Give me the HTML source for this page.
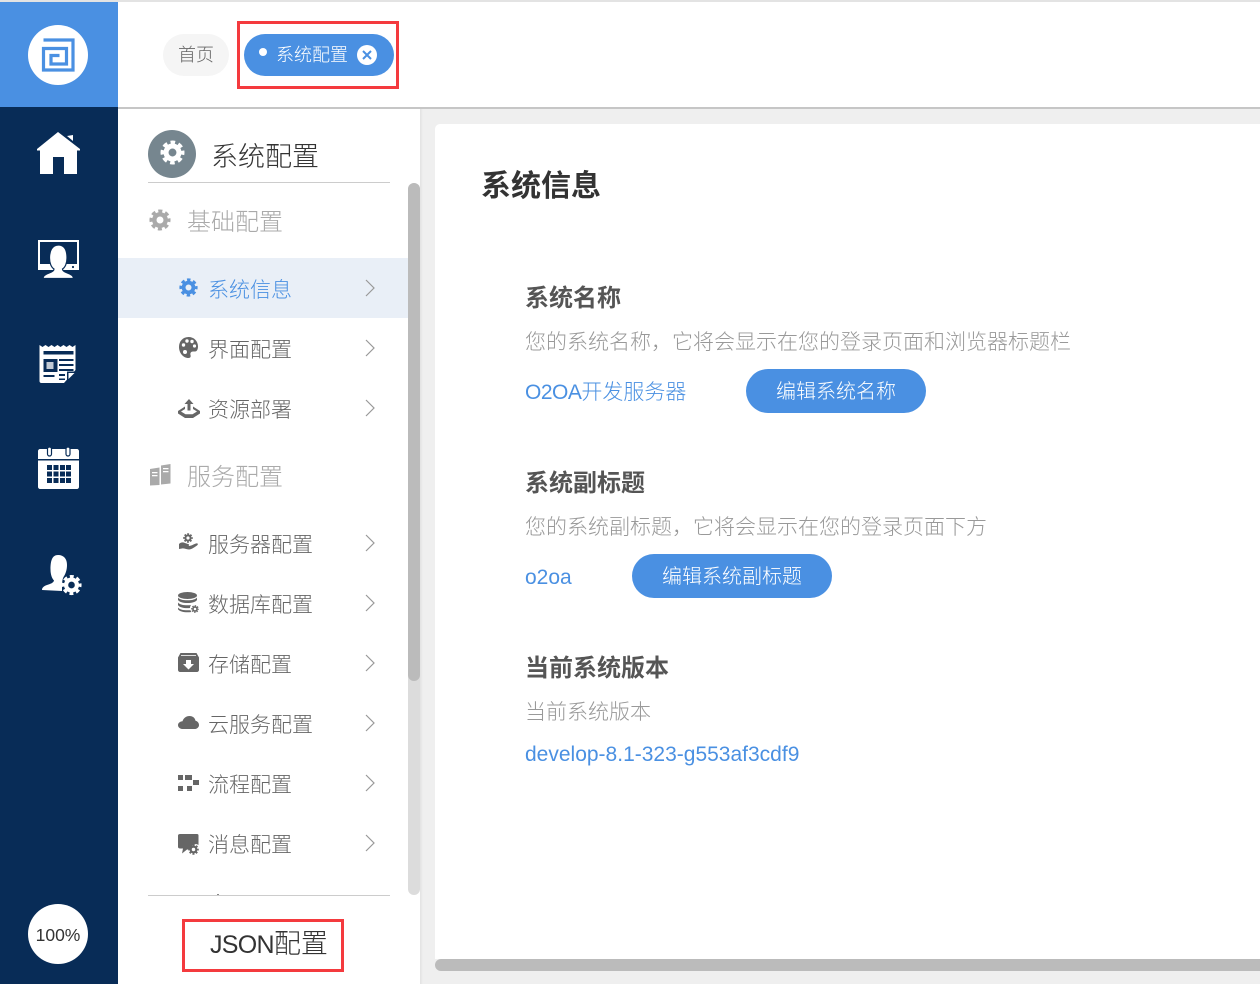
<!DOCTYPE html>
<html lang="zh"><head><meta charset="utf-8"><title>系统配置</title>
<style>
html,body{margin:0;padding:0;background:#fff}
body{position:relative;width:1260px;height:984px;overflow:hidden;font-family:"Liberation Sans","Noto Sans CJK SC",sans-serif;font-weight:300}
.a{position:absolute;display:block}
.t{position:absolute;white-space:nowrap;line-height:40px;height:40px}
.i{position:absolute;overflow:visible}
.row{font-size:21px;color:#666;left:208px}
.h{font-size:24px;color:#aaa;left:187px}
.st{font-size:24px;font-weight:700;color:#555;left:525px}
.d{font-size:21px;color:#999;left:525px}
.l{font-size:21px;color:#4a90e2;left:525px}
.btn{position:absolute;background:#4a90e2;color:#fff;border-radius:22px;height:44px;line-height:47px;text-align:center;font-size:20px;white-space:nowrap}
.ch{position:absolute;left:363.500px;width:12px;height:20px}
</style></head><body>
<svg width="0" height="0" style="position:absolute"><defs>
<symbol id="gear" viewBox="0 0 24 24"><circle cx="12" cy="12" r="6.200" fill="none" stroke="currentColor" stroke-width="4.800"/><circle cx="12" cy="12" r="9.800" fill="none" stroke="currentColor" stroke-width="3.400" stroke-dasharray="4.400 3.300" stroke-dashoffset="2.200"/></symbol>
<symbol id="chev" viewBox="0 0 12 20"><path d="M2 2l8 8-8 8" fill="none" stroke="#999" stroke-width="1.200"/></symbol>
</defs></svg>

<!-- top -->
<div class="a" style="left:0;top:0;width:1260px;height:2px;background:#e3e3e3"></div>
<div class="a" style="left:118px;top:107px;width:1142px;height:2px;background:#c6c6c6"></div>
<div class="a" style="left:420px;top:109px;width:840px;height:875px;background:#efefef"></div>
<div class="a" style="left:420px;top:109px;width:3px;height:875px;background:linear-gradient(90deg,#e2e2e2,#efefef)"></div>
<div class="a" style="left:435px;top:124px;width:825px;height:835px;background:#fff;border-top-left-radius:5px"></div>
<div class="a" style="left:435px;top:959px;width:825px;height:12px;background:#bbb;border-radius:6px 0 0 6px"></div>

<!-- left nav -->
<div class="a" style="left:0;top:2px;width:118px;height:105px;background:#4a90e2"></div>
<div class="a" style="left:0;top:107px;width:118px;height:877px;background:#082c57"></div>
<div class="a" style="left:28px;top:25px;width:60px;height:60px;border-radius:50%;background:#fff"></div>
<svg class="i" style="left:41px;top:38px" width="34" height="34" viewBox="0 0 34 34" fill="none" stroke="#4a90e2" stroke-width="3.200">
<path d="M2.500 2H32V32H2.500V10.500H25.500V26H10V17.500H18.500"/></svg>

<svg class="i" style="left:36px;top:131px" width="46" height="44" viewBox="0 0 46 44" fill="#fff"><path d="M22 1L1 18v1.500h3V43h13V26h11v17h13V19.500h3V18z"/><path d="M31 5l6-1v6z"/></svg>

<svg class="i" style="left:37px;top:239px" width="43" height="40" viewBox="0 0 43 40"><path d="M2 2h39v27H2z" fill="none" stroke="#fff" stroke-width="2"/><path d="M1 25h41v6H1z" fill="#fff"/><circle cx="36" cy="28" r="1.100" fill="#082c57"/><path d="M6 39.500c0-3 3-4.500 6-5.500 2.500-.8 5-1.800 5-4-2.500-1.500-4.500-5.500-4.500-11C12.500 12 15 6 21.500 6S30 12 30 19c0 5.500-2 9.500-4.500 11 0 2.200 2.500 3.200 5 4 3 1 6 2.500 6 5.500z" fill="#fff" stroke="#082c57" stroke-width="1.200"/></svg>

<svg class="i" style="left:39px;top:344px" width="39" height="39" viewBox="0 0 39 39"><path d="M.5 1l3 2 3-2 3 2 3-2 3 2 3-2 3 2 3-2 3 2 3-2 3 2 3-2V26L25 39H2.500C1 39 .5 38 .5 37z" fill="#fff"/><path d="M4.500 7h30v3.500h-30z" fill="#082c57"/><path d="M4.500 15h14v13h-14z" fill="#082c57"/><path d="M7.500 18h7v7h-7z" fill="#fff" opacity=".75"/><path d="M20 15h14.500v2H20zM20 20h14.500v2H20zM20 25h14.500v2H20zM4.500 31h11v2h-11zM20 30h6v2h-6zM20 34.500h6v1.500h-6z" fill="#082c57"/><path d="M38 27.500L28 37.500V27.500z" fill="#082c57"/><path d="M29.500 29h6L29.500 35z" fill="#fff"/></svg>

<svg class="i" style="left:38px;top:446px" width="42" height="44" viewBox="0 0 42 44"><path d="M2 3h37c1 0 2 1 2 2v8H0V5c0-1 1-2 2-2zM0 14.500h41V41c0 1-1 2-2 2H2c-1 0-2-1-2-2z" fill="#fff"/><rect x="9.500" y="1" width="4" height="9" rx="2" fill="#fff" stroke="#082c57" stroke-width="1.200"/><rect x="28" y="1" width="4" height="9" rx="2" fill="#fff" stroke="#082c57" stroke-width="1.200"/><g fill="#082c57"><path d="M9 19h5v5H9zM15.500 19h5v5h-5zM22 19h5v5h-5zM28 19h5v5h-5zM9 25.500h5v5H9zM15.500 25.500h5v5h-5zM22 25.500h5v5h-5zM28 25.500h5v5h-5zM9 32h5v5H9zM15.500 32h5v5h-5zM22 32h5v5h-5zM28 32h5v5h-5z"/></g></svg>

<svg class="i" style="left:42px;top:554px" width="40" height="44" viewBox="0 0 40 44"><path d="M0 36c0-2.500 2-4 5-5 3-1 6.500-2 7-4.500-2-2-3.500-6-3.500-11C8.500 7 10 1 16 1s9 4 9 10c0 5-1.500 9-3.500 12-1 2-1.500 5-1.500 8v6z" fill="#fff"/><svg x="19" y="20" width="21" height="22" viewBox="0 0 24 24" color="#fff"><use href="#gear"/></svg></svg>

<div class="a" style="left:28px;top:904px;width:60px;height:60px;border-radius:50%;background:#fff;color:#333;font-size:17.500px;text-align:center;line-height:62px;font-weight:300">100%</div>

<!-- tabs -->
<div class="a" style="left:163px;top:34px;width:66px;height:42px;border-radius:21px;background:#f5f5f5;text-align:center;line-height:43px;font-size:18px;color:#666">首页</div>
<div class="a" style="left:244px;top:34px;width:150px;height:42px;border-radius:21px;background:#4a90e2"></div>
<div class="a" style="left:259px;top:48px;width:8px;height:8px;border-radius:50%;background:#fff"></div>
<div class="t" style="left:276px;top:35px;font-size:18px;color:#fff">系统配置</div>
<svg class="i" style="left:357px;top:45px" width="20" height="20" viewBox="0 0 20 20"><circle cx="10" cy="10" r="10" fill="#fff"/><path d="M6 6l8 8M14 6l-8 8" stroke="#4a90e2" stroke-width="2"/></svg>
<div class="a" style="left:237px;top:21px;width:156px;height:62px;border:3px solid #f43a3e"></div>

<!-- side menu -->
<div class="a" style="left:408px;top:183px;width:12px;height:712px;background:#dcdcdc;border-radius:6px"></div>
<div class="a" style="left:408px;top:183px;width:12px;height:498px;background:#bbb;border-radius:6px"></div>
<div class="a" style="left:148px;top:130px;width:48px;height:48px;border-radius:50%;background:#76868f"></div>
<svg class="i" style="left:160px;top:140px;color:#fff" width="25" height="25"><use href="#gear"/></svg>
<div class="t" style="left:211px;top:137px;font-size:27px;color:#333">系统配置</div>
<div class="a" style="left:148px;top:182px;width:242px;height:1px;background:#ccc"></div>
<svg class="i" style="left:149px;top:209px;color:#aaa" width="22" height="22"><use href="#gear"/></svg>
<div class="t h" style="top:203px">基础配置</div>

<div class="a" style="left:118px;top:258px;width:290px;height:60px;background:#e9eff7"></div>
<svg class="i" style="left:179px;top:278px;color:#4a90e2" width="19" height="19"><use href="#gear"/></svg>
<div class="t row" style="top:271px;color:#4a90e2">系统信息</div>
<svg class="ch" style="top:278px"><use href="#chev"/></svg>

<svg class="i" style="left:179px;top:337px" width="19" height="21" viewBox="0 0 19 21"><path d="M9.500 0C4 0 0 4.200 0 10s4 11 9.500 11c2 0 2.500-1.500 2-3-.5-2 .5-3.500 2.500-3.500h2C18 14.500 19 12 19 9.500 19 4 15 0 9.500 0z" fill="#666"/><g fill="#fff"><circle cx="4.500" cy="8" r="1.700"/><circle cx="8" cy="4" r="1.700"/><circle cx="13" cy="4.500" r="1.700"/><circle cx="15.500" cy="9" r="1.600"/><circle cx="6" cy="15" r="2"/></g></svg>
<div class="t row" style="top:331px">界面配置</div>
<svg class="ch" style="top:338px"><use href="#chev"/></svg>

<svg class="i" style="left:178px;top:399px" width="22" height="20" viewBox="0 0 22 20" fill="#666"><path d="M11 0l4.500 5h-3v6.500h-3V5h-3z"/><path d="M7 7.500L0 12v2.500L7 19h8l7-4.500V12l-7-4.500v2.500l4 2.500-4.500 2.800h-7L3 12.500 7 10z"/></svg>
<div class="t row" style="top:391px">资源部署</div>
<svg class="ch" style="top:398px"><use href="#chev"/></svg>

<svg class="i" style="left:150px;top:464px" width="21" height="22" viewBox="0 0 21 22" fill="#aaa"><path d="M0 5l9.500-1.500V21L0 21.500z"/><path d="M11 1.500L20.500 0v19.500L11 20.500z"/><path d="M2 8h5.500v1.300H2zM2 11h5.500v1.300H2zM13 4h5.500v1.300H13zM13 7h5.500v1.300H13z" fill="#fff"/></svg>
<div class="t h" style="top:458px">服务配置</div>

<svg class="i" style="left:179px;top:531px" width="20" height="20" viewBox="0 0 20 20" fill="#666"><path d="M0 13c2-2 4-2 6-1l3 1c1.500 0 1.500 2 0 2H6.500h3.500c2 0 5-2 7-2.500 2-.5 2.500 1 1 2-3 2-5.500 4-8 4-3 0-5-1.500-7-1L0 18z"/></svg>
<svg class="i" style="left:183px;top:533px;color:#666" width="10" height="10"><use href="#gear"/></svg>
<div class="t row" style="top:526px">服务器配置</div>
<svg class="ch" style="top:533px"><use href="#chev"/></svg>

<svg class="i" style="left:178px;top:592px" width="21" height="21" viewBox="0 0 21 21" fill="#666"><ellipse cx="9.500" cy="3.500" rx="9.500" ry="3.500"/><path d="M0 5.500c1.500 2 5 2.800 9.500 2.800S17.500 7.500 19 5.500V8c-1.500 2-5 3-9.500 3S1.500 10 0 8zM0 10.500c1.500 2 5 2.800 9.500 2.800 1.300 0 2.500 0 3.500-.3-.7 1-1 2-1 3-.8.100-1.600.100-2.500.100-4.500 0-8-1-9.500-3zM0 15.500c1.500 2 5 2.800 9.500 2.800h3c.3.800.5 1.200 1 1.700-1.300.2-2.700.3-4 .3-4.500 0-8-1-9.500-3z"/></svg>
<svg class="i" style="left:191px;top:605px;color:#666" width="8" height="8"><use href="#gear"/></svg>
<div class="t row" style="top:586px">数据库配置</div>
<svg class="ch" style="top:593px"><use href="#chev"/></svg>

<svg class="i" style="left:178px;top:653px" width="21" height="19" viewBox="0 0 21 19"><path d="M2.500 0h16l2.500 4.500V17c0 1-1 2-2 2H2c-1 0-2-1-2-2V4.500z" fill="#666"/><path d="M3 2.500h15" stroke="#fff" stroke-width=".8"/><path d="M8 7h5v4h3l-5.500 5.500L5 11h3z" fill="#fff"/></svg>
<div class="t row" style="top:646px">存储配置</div>
<svg class="ch" style="top:653px"><use href="#chev"/></svg>

<svg class="i" style="left:178px;top:716px" width="21" height="13" viewBox="0 0 21 15" preserveAspectRatio="none"><path d="M5 15C2 15 0 13 0 10.500S2 6.300 4.500 6C5.500 2.500 8 0 11.500 0c3.500 0 5.500 2.500 6 5.500 2 .5 3.500 2.500 3.500 5 0 2.500-2 4.500-4.500 4.500z" fill="#666"/></svg>
<div class="t row" style="top:706px;left:208px">云服务配置</div>
<svg class="ch" style="top:713px"><use href="#chev"/></svg>

<svg class="i" style="left:178px;top:775px" width="21" height="16" viewBox="0 0 21 16" fill="#666"><path d="M0 0h5v5H0zM7 0h7v5H7zM15 5h6v5h-6zM0 11h5v5H0zM9 11h5v5H9z"/></svg>
<div class="t row" style="top:766px">流程配置</div>
<svg class="ch" style="top:773px"><use href="#chev"/></svg>

<svg class="i" style="left:178px;top:834px" width="22" height="20" viewBox="0 0 22 20"><path d="M2 0h17c1 0 1.500.5 1.500 1.500V11c-2-1.500-5-1-6.500 1-1 1.500-1 3-.5 3.500H9L4 19.500 5 14.500H2c-1 0-2-.5-2-1.500V1.500C0 .5 1 0 2 0z" fill="#666"/></svg>
<svg class="i" style="left:188px;top:844px;color:#666" width="11" height="11"><use href="#gear"/></svg>
<div class="t row" style="top:826px">消息配置</div>
<svg class="ch" style="top:833px"><use href="#chev"/></svg>

<div class="a" style="left:148px;top:895px;width:242px;height:1px;background:#ccc"></div>
<div class="a" style="left:217px;top:894px;width:2px;height:1px;background:#888"></div>
<div class="a" style="left:182px;top:919px;width:156px;height:47px;border:3px solid #f43a3e"></div>
<div class="t" style="left:210px;top:924px;font-size:27px;color:#333"><span style="font-size:25px;letter-spacing:-.7px">JSON</span>配置</div>

<!-- content -->
<div class="t" style="left:481px;top:167px;font-size:30px;font-weight:700;color:#333">系统信息</div>

<div class="t st" style="top:279px">系统名称</div>
<div class="t d" style="top:323px">您的系统名称，它将会显示在您的登录页面和浏览器标题栏</div>
<div class="t l" style="top:373px"><span style="letter-spacing:-.5px">O2OA</span>开发服务器</div>
<div class="btn" style="left:746px;top:369px;width:180px">编辑系统名称</div>

<div class="t st" style="top:464px">系统副标题</div>
<div class="t d" style="top:508px">您的系统副标题，它将会显示在您的登录页面下方</div>
<div class="t l" style="top:558px">o2oa</div>
<div class="btn" style="left:632px;top:554px;width:200px">编辑系统副标题</div>

<div class="t st" style="top:649px">当前系统版本</div>
<div class="t d" style="top:693px">当前系统版本</div>
<div class="t l" style="top:735px">develop-8.1-323-g553af3cdf9</div>
</body></html>
